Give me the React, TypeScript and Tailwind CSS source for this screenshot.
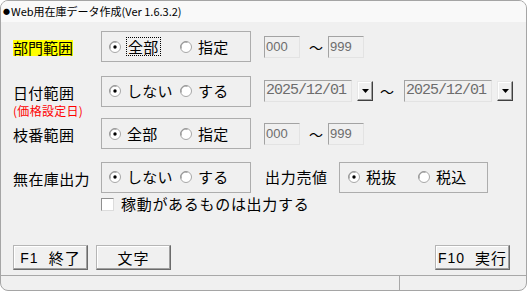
import React from "react";

const jp = "font-['Noto_Sans_CJK_JP','Noto_Sans',sans-serif]";

function Radio({ checked }: { checked?: boolean }) {
  return (
    <svg width="12" height="12" viewBox="0 0 12 12" className="shrink-0">
      <circle cx="6" cy="6" r="5.5" fill="#ffffff" stroke="#a6a6a6" strokeWidth="1" />
      <path d="M1.2 7.5 A5 5 0 0 1 7.5 1.2" fill="none" stroke="#8a8a8a" strokeWidth="1" />
      {checked && <circle cx="6" cy="6" r="1.7" fill="#000000" />}
    </svg>
  );
}

function Opt({ checked, label, w, focus }: { checked?: boolean; label: string; w?: string; focus?: boolean }) {
  return (
    <div className={`flex items-center ${w ?? ""}`}>
      <Radio checked={checked} />
      {focus ? (
        <span className="ml-[5px] border border-dotted border-black px-[1px] text-[15px] leading-[17px] tracking-[0.3px] text-black">
          {label}
        </span>
      ) : (
        <span className="ml-[6px] text-[15px] leading-[18px] tracking-[0.3px] text-black">{label}</span>
      )}
    </div>
  );
}

function Group({ children, w, pl }: { children: React.ReactNode; w: string; pl: string }) {
  return (
    <div className={`${w} h-[31px] border border-[#adadad] flex items-center ${pl}`}>{children}</div>
  );
}

function TextBox({ value }: { value: string }) {
  return (
    <div className="w-[36px] h-[22px] border border-[#a3a3a3] border-r-[#e3e3e3] border-b-[#e3e3e3] bg-[#f0f0f0] flex items-center pl-[1px] font-['Liberation_Sans',sans-serif] text-[13px] text-[#6d6d6d]">
      {value}
    </div>
  );
}

function Tilde({ w }: { w: string }) {
  return <span className={`${w} text-[14px] leading-[14px] text-black text-center`}>～</span>;
}

function DateCombo() {
  return (
    <div className="flex items-center">
      <div className="w-[88px] h-[22px] border border-[#a3a3a3] border-r-[#e3e3e3] border-b-[#e3e3e3] bg-[#f0f0f0] flex items-center pl-[1px] font-['Liberation_Mono',monospace] text-[15px] tracking-[-1px] text-[#6d6d6d]">
        2025/12/01
      </div>
      <div className="ml-[5px] w-[16px] h-[20px] border border-[#e8e8e8] border-r-[#404040] border-b-[#404040] shadow-[inset_-1px_-1px_0_#a0a0a0,inset_1px_1px_0_#ffffff] bg-[#f0f0f0] flex items-center justify-center">
        <svg width="7" height="4" viewBox="0 0 7 4">
          <path d="M0 0 H7 L3.5 4 Z" fill="#000" />
        </svg>
      </div>
    </div>
  );
}

function Btn({ a, b, ml }: { a?: string; b: string; ml?: string }) {
  return (
    <div
      className={`${ml ?? ""} w-[75px] h-[25px] bg-[#f0f0f0] border border-[#b5b5b5] border-r-[#6b6b6b] border-b-[#6b6b6b] shadow-[inset_-1px_-1px_0_#a0a0a0,inset_1px_1px_0_#ffffff] flex items-center justify-center text-[15px] leading-[16px] tracking-[1px] text-black`}
    >
      {a && <span className="mr-[10px] font-['Liberation_Sans',sans-serif] text-[14px] tracking-[1px]">{a}</span>}
      <span>{b}</span>
    </div>
  );
}

export default function App() {
  return (
    <div className={`w-[527px] h-[291px] bg-white ${jp}`}>
      <div className="w-[527px] h-[291px] rounded-[8px] border border-[#a5a5a5] overflow-hidden bg-[#f0f0f0] flex flex-col">
        {/* title */}
        <div className="h-[21px] bg-[#f9f9f9] flex items-center pl-[2px] text-[11px] text-black">
          <span className="text-[7px] mr-[1px]">●</span>
          <span>Web用在庫データ作成(Ver 1.6.3.2)</span>
        </div>

        {/* row 1 */}
        <div className="mt-[9px] h-[31px] flex items-center pl-[12px]">
          <div className="w-[88px]">
            <span className="bg-[#ffff00] text-[15px] leading-[16px] inline-block">部門範囲</span>
          </div>
          <Group w="w-[150px]" pl="pl-[7px]">
            <Opt checked label="全部" w="w-[71px]" focus />
            <Opt label="指定" />
          </Group>
          <div className="ml-[13px] flex items-center">
            <TextBox value="000" />
            <Tilde w="ml-[9px] w-[12px]" />
            <div className="ml-[7px]">
              <TextBox value="999" />
            </div>
          </div>
        </div>

        {/* row 2 */}
        <div className="mt-[13px] h-[32px] flex items-start pl-[12px]">
          <div className="w-[88px] flex flex-col pt-[10px]">
            <span className="text-[15px] leading-[15px] tracking-[0.3px]">日付範囲</span>
            <span className="mt-[5px] text-[12px] leading-[12px] text-[#ff0000] tracking-[0.3px]">(価格設定日)</span>
          </div>
          <div className="h-[32px] flex items-center">
            <Group w="w-[150px]" pl="pl-[7px]">
              <Opt checked label="しない" w="w-[71px]" />
              <Opt label="する" />
            </Group>
            <div className="ml-[13px] flex items-center">
              <DateCombo />
              <Tilde w="ml-[7px] w-[13px]" />
              <div className="ml-[11px]">
                <DateCombo />
              </div>
            </div>
          </div>
        </div>

        {/* row 3 */}
        <div className="mt-[11px] h-[31px] flex items-center pl-[12px]">
          <div className="w-[88px] text-[15px] leading-[16px] tracking-[0.3px] pt-[2px]">枝番範囲</div>
          <Group w="w-[150px]" pl="pl-[7px]">
            <Opt checked label="全部" w="w-[71px]" />
            <Opt label="指定" />
          </Group>
          <div className="ml-[13px] flex items-center">
            <TextBox value="000" />
            <Tilde w="ml-[9px] w-[12px]" />
            <div className="ml-[7px]">
              <TextBox value="999" />
            </div>
          </div>
        </div>

        {/* row 4 */}
        <div className="mt-[13px] h-[30px] flex items-center pl-[12px]">
          <div className="w-[88px] text-[15px] leading-[16px] tracking-[0.4px] pt-[3px]">無在庫出力</div>
          <Group w="w-[150px]" pl="pl-[7px]">
            <Opt checked label="しない" w="w-[71px]" />
            <Opt label="する" />
          </Group>
          <div className="ml-[14px] w-[74px] text-[15px] leading-[16px] tracking-[0.7px]">出力売値</div>
          <Group w="w-[149px]" pl="pl-[8px]">
            <Opt checked label="税抜" w="w-[70px]" />
            <Opt label="税込" />
          </Group>
        </div>

        {/* checkbox */}
        <div className="mt-[5px] h-[14px] flex items-center pl-[100px]">
          <div className="w-[13px] h-[13px] bg-white border border-[#8f8f8f] border-r-[#dcdcdc] border-b-[#dcdcdc]" />
          <span className="ml-[7px] text-[15px] leading-[16px] tracking-[0.7px]">稼動があるものは出力する</span>
        </div>

        {/* buttons */}
        <div className="mt-[34px] h-[25px] flex items-center pl-[12px]">
          <Btn a="F1" b="終了" />
          <Btn b="文字" ml="ml-[8px]" />
          <div className="flex-1" />
          <Btn a="F10" b="実行" />
          <div className="w-[16px]" />
        </div>

        {/* status bar */}
        <div className="mt-[5px] flex-1 border-t border-[#a8a8a8] flex">
          <div className="w-[399px] border-r border-[#a8a8a8]" />
          <div className="flex-1" />
        </div>
      </div>
    </div>
  );
}
